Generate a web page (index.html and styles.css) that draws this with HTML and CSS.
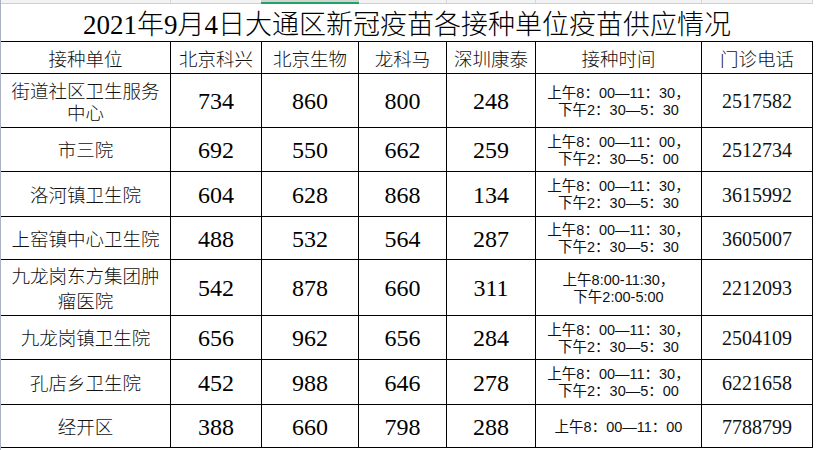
FILE: index.html
```html
<!DOCTYPE html>
<html lang="zh-CN">
<head>
<meta charset="utf-8">
<title>2021年9月4日大通区新冠疫苗各接种单位疫苗供应情况</title>
<link rel="stylesheet" href="styles.css">
</head>
<body>
<div class="sheet">
  <div class="colbar">
    <span></span><span></span><span class="sel"></span><span></span><span></span><span></span><span></span>
  </div>
  <h1 class="title">2021年9月4日大通区新冠疫苗各接种单位疫苗供应情况</h1>
  <div class="grid" role="table">
    <div class="hd">接种单位</div>
    <div class="hd">北京科兴</div>
    <div class="hd">北京生物</div>
    <div class="hd">龙科马</div>
    <div class="hd">深圳康泰</div>
    <div class="hd">接种时间</div>
    <div class="hd">门诊电话</div>

    <div class="name lh22">街道社区卫生服务中心</div>
    <div class="num">734</div><div class="num">860</div><div class="num">800</div><div class="num">248</div>
    <div class="time"><p>上午8：00—11：30，下午2：30—5：30</p></div>
    <div class="tel">2517582</div>

    <div class="name">市三院</div>
    <div class="num">692</div><div class="num">550</div><div class="num">662</div><div class="num">259</div>
    <div class="time"><p>上午8：00—11：00，下午2：30—5：00</p></div>
    <div class="tel">2512734</div>

    <div class="name">洛河镇卫生院</div>
    <div class="num">604</div><div class="num">628</div><div class="num">868</div><div class="num">134</div>
    <div class="time"><p>上午8：00—11：30，下午2：30—5：30</p></div>
    <div class="tel">3615992</div>

    <div class="name">上窑镇中心卫生院</div>
    <div class="num">488</div><div class="num">532</div><div class="num">564</div><div class="num">287</div>
    <div class="time"><p>上午8：00—11：30，下午2：30—5：30</p></div>
    <div class="tel">3605007</div>

    <div class="name lh25">九龙岗东方集团肿瘤医院</div>
    <div class="num">542</div><div class="num">878</div><div class="num">660</div><div class="num">311</div>
    <div class="time"><p class="narrow">上午8:00-11:30，下午2:00-5:00</p></div>
    <div class="tel">2212093</div>

    <div class="name">九龙岗镇卫生院</div>
    <div class="num">656</div><div class="num">962</div><div class="num">656</div><div class="num">284</div>
    <div class="time"><p>上午8：00—11：30，下午2：30—5：30</p></div>
    <div class="tel">2504109</div>

    <div class="name">孔店乡卫生院</div>
    <div class="num">452</div><div class="num">988</div><div class="num">646</div><div class="num">278</div>
    <div class="time"><p>上午8：00—11：30，下午2：30—5：00</p></div>
    <div class="tel">6221658</div>

    <div class="name">经开区</div>
    <div class="num">388</div><div class="num">660</div><div class="num">798</div><div class="num">288</div>
    <div class="time"><p>上午8：00—11：00</p></div>
    <div class="tel">7788799</div>
  </div>
</div>
</body>
</html>
```

FILE: styles.css
```css
html, body {
  margin: 0;
  padding: 0;
  background: #ffffff;
}

body {
  font-family: "Noto Sans CJK SC", sans-serif;
  color: #111;
  width: 817px;
  height: 450px;
  overflow: hidden;
}

.sheet {
  border-left: 1px solid #a9b1c2;
  height: 450px;
  box-sizing: border-box;
}

.colbar {
  display: grid;
  grid-template-columns: 169px 90px 96px 87px 88px 165px 110px;
  column-gap: 1px;
  width: 812px;
  height: 3px;
  background: #d5d5d5;
  border-bottom: 1px solid #cfcfcf;
}

.colbar span {
  background: #f3f3f3;
}

.colbar .sel {
  background: #d2d2d2;
  border-bottom: 1px solid #21a366;
  box-shadow: 0 1px 0 #21a366;
  margin: 0 -1px;
}

.title {
  margin: 0;
  width: 812px;
  height: 37px;
  box-sizing: border-box;
  padding-top: 6px;
  text-align: center;
  font-family: "Liberation Serif", "Noto Sans CJK SC", serif;
  font-weight: 300;
  font-size: 27px;
  line-height: 31px;
  color: #000;
}

.grid {
  display: grid;
  grid-template-columns: 169px 90px 96px 87px 88px 165px 110px;
  grid-template-rows: 31px 53px 43px 44px 42px 55px 43px 44px 42px;
  gap: 1px;
  padding: 1px 1px 1px 0;
  width: max-content;
  background: #000;
}

.grid > div {
  background: #fff;
  display: flex;
  align-items: center;
  justify-content: center;
  text-align: center;
  overflow: hidden;
}

.hd {
  font-size: 18.5px;
  font-weight: 300;
  color: #111;
}

.name {
  font-size: 18.5px;
  font-weight: 300;
  line-height: 23px;
  padding: 0 8px;
}

.lh22 {
  line-height: 22px;
}

.lh25 {
  line-height: 25px;
}

.num {
  font-family: "Liberation Serif", serif;
  font-size: 24px;
  color: #000;
  padding-top: 2px;
}

.grid > .time {
  font-family: "Liberation Sans", "Noto Sans CJK SC", sans-serif;
  font-size: 14.5px;
  font-weight: 400;
  line-height: 17px;
  padding-top: 2px;
  color: #111;
}

.time p {
  margin: 0;
  width: 150px;
  text-align: center;
}

.time p.narrow {
  width: 122px;
}

.tel {
  font-family: "Liberation Serif", serif;
  font-size: 20px;
  color: #111;
  padding-top: 2px;
}
```
